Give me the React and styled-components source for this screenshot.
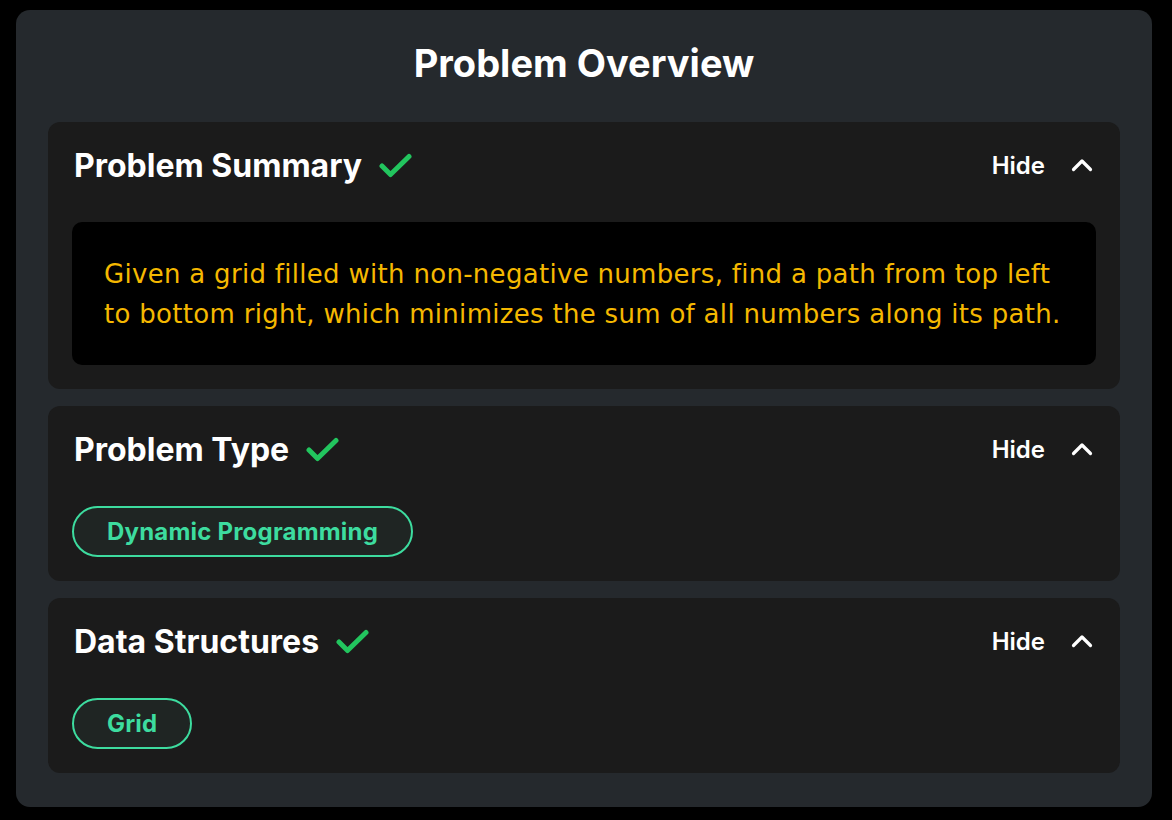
import React from "react";
import styled, { createGlobalStyle } from "styled-components";

const GlobalStyle = createGlobalStyle`
  html, body {
    margin: 0;
    padding: 0;
    background: #000;
  }
  body {
    font-family: Inter, "Noto Sans", sans-serif;
  }
`;

const Page = styled.div`
  padding: 10px 20px 14px 16px;
  box-sizing: border-box;
  width: 1172px;
`;

const Panel = styled.section`
  background: #25292d;
  border-radius: 14px;
  padding: 26px 32px 34px;
  display: flex;
  flex-direction: column;
  gap: 17px;
`;

const Title = styled.h1`
  margin: 0 0 15px;
  text-align: center;
  color: #fff;
  font-size: 38px;
  font-weight: 700;
  line-height: 54px;
`;

const Card = styled.div`
  background: #1b1b1b;
  border-radius: 12px;
  padding: 24px;
  display: flex;
  flex-direction: column;
  gap: 38px;
`;

const Header = styled.div`
  display: flex;
  align-items: center;
  justify-content: space-between;
  height: 38px;
`;

const HeadTitle = styled.h2`
  margin: 0 0 0 2px;
  display: flex;
  align-items: center;
  gap: 16px;
  color: #fff;
  font-size: 32px;
  font-weight: 700;
`;

const Toggle = styled.button`
  background: none;
  border: 0;
  padding: 0 3px 0 0;
  display: flex;
  align-items: center;
  gap: 26px;
  color: #fff;
  font-family: inherit;
  font-size: 24px;
  font-weight: 600;
  cursor: pointer;
`;

const Summary = styled.div`
  background: #000;
  border-radius: 10px;
  padding: 32px 32px 31px;
  color: #f5b800;
  font-family: "DejaVu Sans", sans-serif;
  font-size: 26px;
  letter-spacing: 0.3px;
  line-height: 40px;
  white-space: nowrap;
`;

const Tags = styled.div`
  display: flex;
  gap: 12px;
`;

const Tag = styled.span`
  display: inline-flex;
  align-items: center;
  height: 51px;
  box-sizing: border-box;
  padding: 0 33px;
  border: 2px solid #3ddc9f;
  border-radius: 26px;
  background: #1f2523;
  color: #3ddc9f;
  font-size: 24px;
  font-weight: 700;
  letter-spacing: 0.2px;
`;

const Check = () => (
  <svg width="34" height="28" viewBox="0 0 34 28" fill="none">
    <path
      d="M4 15 L12.5 23.5 L31 5.5"
      stroke="#22c55e"
      strokeWidth="5"
      strokeLinecap="round"
      strokeLinejoin="round"
    />
  </svg>
);

const Chevron = () => (
  <svg width="22" height="14" viewBox="0 0 22 14" fill="none">
    <path
      d="M2.5 11.5 L11 3 L19.5 11.5"
      stroke="#fff"
      strokeWidth="3.2"
      strokeLinecap="round"
      strokeLinejoin="round"
    />
  </svg>
);

const Section = ({ title, children }) => (
  <Card>
    <Header>
      <HeadTitle>
        {title}
        <Check />
      </HeadTitle>
      <Toggle>
        Hide
        <Chevron />
      </Toggle>
    </Header>
    {children}
  </Card>
);

export default function App() {
  return (
    <Page>
      <GlobalStyle />
      <Panel>
        <Title>Problem Overview</Title>
        <Section title="Problem Summary">
          <Summary>
            Given a grid filled with non-negative numbers, find a path from top left
            <br />
            to bottom right, which minimizes the sum of all numbers along its path.
          </Summary>
        </Section>
        <Section title="Problem Type">
          <Tags>
            <Tag>Dynamic Programming</Tag>
          </Tags>
        </Section>
        <Section title="Data Structures">
          <Tags>
            <Tag>Grid</Tag>
          </Tags>
        </Section>
      </Panel>
    </Page>
  );
}
